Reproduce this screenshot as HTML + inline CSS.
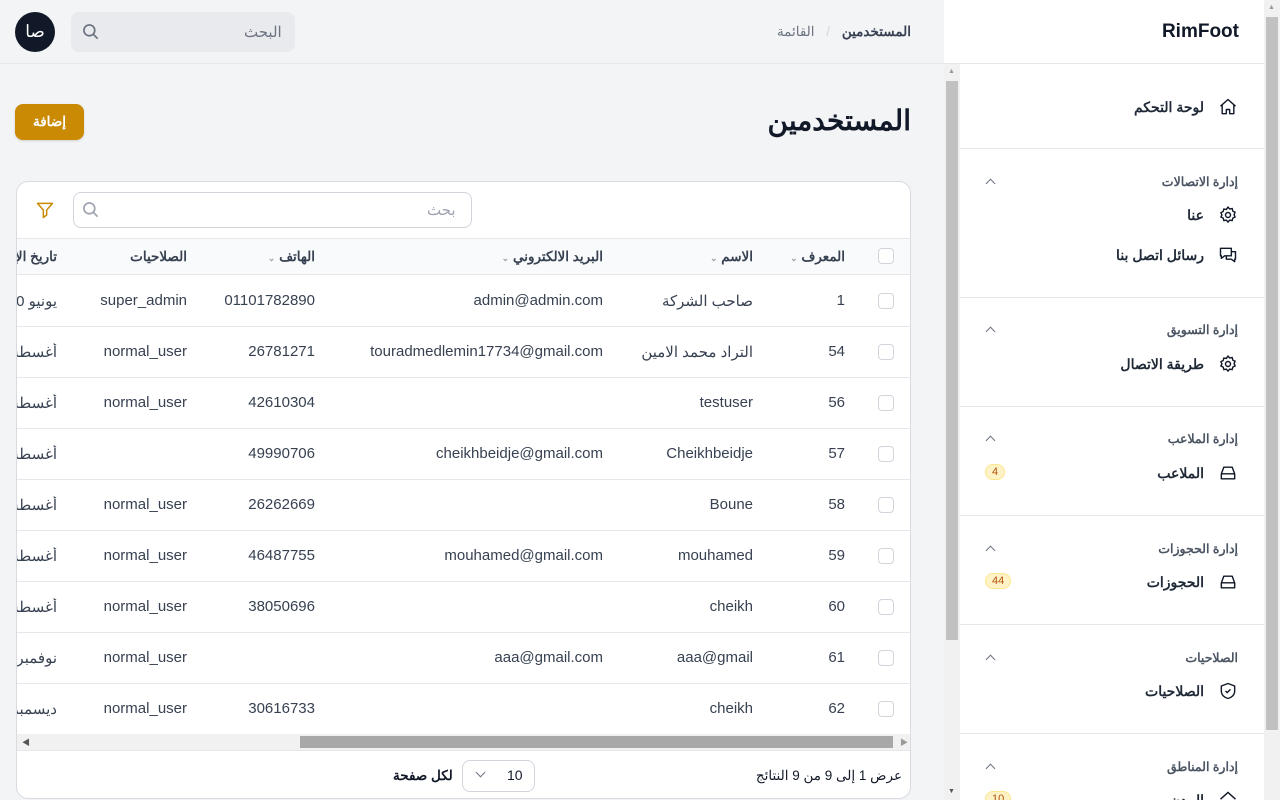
<!DOCTYPE html>
<html dir="rtl" lang="ar"><head><meta charset="utf-8"><style>
*{box-sizing:border-box;margin:0;padding:0}
html,body{width:1280px;height:800px;overflow:hidden}
body{background:#f3f4f6;font-family:"Liberation Sans","Noto Sans CJK SC",sans-serif;color:#111827;position:relative}
.abs{position:absolute}
.sb{background:#f1f1f1}
.thumb{background:#c1c1c1}
.navi{position:absolute;right:26px;font-size:14px;font-weight:bold;color:#1f2937;display:flex;align-items:center;gap:14px;direction:rtl}
.grp{position:absolute;right:26px;font-size:12.5px;color:#4b5563;font-weight:bold}
.chev{position:absolute;left:27px;width:7px;height:7px;border-left:1.3px solid #6b7280;border-top:1.3px solid #6b7280;transform:rotate(45deg)}
.hr{position:absolute;left:0;right:0;height:1px;background:#e5e7eb}
.badge{position:absolute;font-size:11px;color:#b45309;background:#fef3c7;border:1px solid #fde68a;border-radius:10px;padding:1px 6px;left:25px}
.td{position:absolute;font-size:15px;color:#374151;white-space:nowrap}
.th{position:absolute;font-size:13.5px;font-weight:bold;color:#374151;white-space:nowrap}
.cb{position:absolute;width:16px;height:16px;border:1px solid #d1d5db;border-radius:4px;background:#fff}
.rowb{position:absolute;left:0;right:0;height:1px;background:#e5e7eb}
</style></head><body>
<div class="abs" style="left:0;top:0;width:944px;height:64px;border-bottom:1px solid #e5e7eb"></div>
<div class="abs" style="left:15px;top:12px;width:40px;height:40px;border-radius:50%;background:#111827;color:#fff;font-size:17px;display:flex;align-items:center;justify-content:center">صا</div>
<div class="abs" style="left:71px;top:12px;width:224px;height:40px;border-radius:8px;background:#e9eaed"></div>
<div class="abs" style="left:244px;top:23px;font-size:15px;color:#6b7280">البحث</div>
<svg class="abs" style="left:81px;top:22px" width="20" height="20" viewBox="0 0 24 24" fill="none" stroke="#6b7280" stroke-width="2"><circle cx="10" cy="10" r="6.5"/><path d="M15 15l5 5"/></svg>
<div class="abs" style="right:369px;top:24px;font-size:13.5px;color:#6b7280;direction:rtl"><b style="color:#374151">المستخدمين</b> <span style="color:#d1d5db;margin:0 8px">/</span> القائمة</div>
<div class="abs" style="right:369px;top:104px;font-size:28px;font-weight:bold;color:#111827">المستخدمين</div>
<div class="abs" style="left:15px;top:104px;width:69px;height:36px;border-radius:8px;background:#ca8a04;color:#fff;font-size:13.5px;font-weight:bold;display:flex;align-items:center;justify-content:center;box-shadow:0 1px 2px rgba(0,0,0,.15)">إضافة</div>
<div class="abs" style="left:16px;top:181px;width:895px;height:618px;background:#fff;border:1px solid #d9dbe0;border-radius:12px;overflow:hidden">
 <svg class="abs" style="left:18px;top:18px" width="20" height="20" viewBox="0 0 24 24" fill="none" stroke="#ca8a04" stroke-width="1.8" stroke-linejoin="round"><path d="M3 4h18l-7 8v6l-4 3v-9z"/></svg>
 <div class="abs" style="left:56px;top:10px;width:399px;height:36px;border:1px solid #d1d5db;border-radius:8px"></div>
 <svg class="abs" style="left:64px;top:18px" width="20" height="20" viewBox="0 0 24 24" fill="none" stroke="#9ca3af" stroke-width="2"><circle cx="10" cy="10" r="6.5"/><path d="M15 15l5 5"/></svg>
 <div class="abs" style="left:410px;top:19px;font-size:15px;color:#9ca3af">بحث</div>
 <div class="abs" style="left:0;top:56px;width:895px;height:37px;background:#f9fafb;border-top:1px solid #e5e7eb;border-bottom:1px solid #e5e7eb"></div>
 <div class="cb" style="left:861px;top:66px"></div>
 <div class="th" style="right:65px;top:67px">المعرف <span style="color:#9ca3af;font-size:9px">⌄</span></div>
 <div class="th" style="right:157px;top:67px">الاسم <span style="color:#9ca3af;font-size:9px">⌄</span></div>
 <div class="th" style="right:307px;top:67px">البريد الالكتروني <span style="color:#9ca3af;font-size:9px">⌄</span></div>
 <div class="th" style="right:595px;top:67px">الهاتف <span style="color:#9ca3af;font-size:9px">⌄</span></div>
 <div class="th" style="right:723px;top:67px">الصلاحيات</div>
 <div class="th" style="left:0;top:67px;width:40px;overflow:hidden;direction:rtl">تاريخ الإنشاء</div>
 <div id="rows"></div>
 <div class="abs" style="left:0;top:552px;width:895px;height:16px;background:#f1f1f1"></div>
 <div class="abs" style="left:283px;top:554px;width:593px;height:12px;background:#a8a8a8"></div>
 <div class="abs" style="left:5px;top:555px;font-size:8px;color:#555">◀</div>
 <div class="abs" style="left:883px;top:555px;font-size:8px;color:#999">▶</div>
 <div class="abs" style="left:0;top:568px;width:895px;height:1px;background:#e5e7eb"></div>
 <div class="abs" style="right:8px;top:586px;font-size:13.5px;color:#111827">عرض 1 إلى 9 من 9 النتائج</div>
 <div class="abs" style="left:445px;top:578px;width:73px;height:32px;border:1px solid #d1d5db;border-radius:8px"></div>
 <div class="abs" style="left:490px;top:585px;font-size:14px">10</div>
 <div class="abs" style="left:460px;top:587px;width:7px;height:7px;border-right:1.3px solid #6b7280;border-bottom:1.3px solid #6b7280;transform:rotate(45deg)"></div>
 <div class="abs" style="left:376px;top:586px;font-size:13.5px;font-weight:bold">لكل صفحة</div>
</div>
<div class="abs sb" style="left:944px;top:64px;width:16px;height:736px"></div>
<div class="abs thumb" style="left:946px;top:81px;width:12px;height:559px"></div>
<div class="abs" style="left:948px;top:68px;font-size:7px;color:#999">▲</div>
<div class="abs" style="left:948px;top:788px;font-size:7px;color:#555">▼</div>
<div class="abs" style="left:944px;top:0;width:320px;height:64px;background:#fff;border-bottom:1px solid #e5e7eb"></div>
<div class="abs" style="right:41px;top:21px;font-size:19px;font-weight:bold;color:#111827">RimFoot</div>
<div class="abs" style="left:960px;top:64px;width:304px;height:736px;background:#fff;overflow:hidden">
 <div class="navi" style="top:33px"><svg width="20" height="20" viewBox="0 0 24 24" fill="none" stroke="#111827" stroke-width="1.7" stroke-linejoin="round"><path d="M3 11l9-8 9 8M5 9.5V20h5v-5h4v5h5V9.5"/></svg>لوحة التحكم</div>
 <div class="hr" style="top:84px"></div>
 <div class="grp" style="top:110px">إدارة الاتصالات</div><div class="chev" style="top:116px"></div>
 <div class="navi" style="top:141px"><svg width="20" height="20" viewBox="0 0 24 24" fill="none" stroke="#111827" stroke-width="1.7"><circle cx="12" cy="12" r="3"/><path d="M12 2.5l2 2.3 3-.5.8 3 2.7 1.4-1.2 2.8 1.2 2.8-2.7 1.4-.8 3-3-.5-2 2.3-2-2.3-3 .5-.8-3-2.7-1.4L4.7 12 3.5 9.2l2.7-1.4.8-3 3 .5z"/></svg>عنا</div>
 <div class="navi" style="top:181px"><svg width="20" height="20" viewBox="0 0 24 24" fill="none" stroke="#111827" stroke-width="1.7" stroke-linejoin="round"><path d="M3 4h13v9H8l-4 3v-3H3zM16 8h5v9h-1v3l-4-3h-6v-4"/></svg>رسائل اتصل بنا</div>
 <div class="hr" style="top:233px"></div>
 <div class="grp" style="top:258px">إدارة التسويق</div><div class="chev" style="top:264px"></div>
 <div class="navi" style="top:290px"><svg width="20" height="20" viewBox="0 0 24 24" fill="none" stroke="#111827" stroke-width="1.7"><circle cx="12" cy="12" r="3"/><path d="M12 2.5l2 2.3 3-.5.8 3 2.7 1.4-1.2 2.8 1.2 2.8-2.7 1.4-.8 3-3-.5-2 2.3-2-2.3-3 .5-.8-3-2.7-1.4L4.7 12 3.5 9.2l2.7-1.4.8-3 3 .5z"/></svg>طريقة الاتصال</div>
 <div class="hr" style="top:342px"></div>
 <div class="grp" style="top:367px">إدارة الملاعب</div><div class="chev" style="top:373px"></div>
 <div class="navi" style="top:399px"><svg width="20" height="20" viewBox="0 0 24 24" fill="none" stroke="#111827" stroke-width="1.7" stroke-linejoin="round"><path d="M4 13l3-8h10l3 8v6H4zM4 13h16"/></svg>الملاعب</div><div class="badge" style="top:400px">4</div>
 <div class="hr" style="top:451px"></div>
 <div class="grp" style="top:477px">إدارة الحجوزات</div><div class="chev" style="top:483px"></div>
 <div class="navi" style="top:508px"><svg width="20" height="20" viewBox="0 0 24 24" fill="none" stroke="#111827" stroke-width="1.7" stroke-linejoin="round"><path d="M4 13l3-8h10l3 8v6H4zM4 13h16"/></svg>الحجوزات</div><div class="badge" style="top:509px">44</div>
 <div class="hr" style="top:560px"></div>
 <div class="grp" style="top:586px">الصلاحيات</div><div class="chev" style="top:592px"></div>
 <div class="navi" style="top:617px"><svg width="20" height="20" viewBox="0 0 24 24" fill="none" stroke="#111827" stroke-width="1.7" stroke-linejoin="round"><path d="M12 3l8 3v6c0 5-4 8-8 9-4-1-8-4-8-9V6z M9 12l2 2 4-4"/></svg>الصلاحيات</div>
 <div class="hr" style="top:669px"></div>
 <div class="grp" style="top:695px">إدارة المناطق</div><div class="chev" style="top:701px"></div>
 <div class="navi" style="top:726px"><svg width="20" height="20" viewBox="0 0 24 24" fill="none" stroke="#111827" stroke-width="1.7"><path d="M3 11l9-8 9 8"/></svg>المدن</div><div class="badge" style="top:727px">10</div>
</div>
<div class="abs sb" style="left:1264px;top:0;width:16px;height:800px"></div>
<div class="abs thumb" style="left:1266px;top:17px;width:12px;height:713px"></div>
<div class="abs" style="left:1268px;top:4px;font-size:7px;color:#999">▲</div>
<script>
var d=[["1","صاحب الشركة","admin@admin.com","01101782890","super_admin","يونيو 0"],["54","التراد محمد الامين","touradmedlemin17734@gmail.com","26781271","normal_user","أغسطس"],["56","testuser","","42610304","normal_user","أغسطس"],["57","Cheikhbeidje","cheikhbeidje@gmail.com","49990706","","أغسطس"],["58","Boune","","26262669","normal_user","أغسطس"],["59","mouhamed","mouhamed@gmail.com","46487755","normal_user","أغسطس"],["60","cheikh","","38050696","normal_user","أغسطس"],["61","aaa@gmail","aaa@gmail.com","","normal_user","نوفمبر"],["62","cheikh","","30616733","normal_user","ديسمبر"]];
var h="";d.forEach(function(r,i){var t=93+i*51;var c=t+17;
if(i>0)h+='<div class="rowb" style="top:'+t+'px"></div>';
h+='<div class="cb" style="left:861px;top:'+(c+1)+'px"></div>';
h+='<div class="td" style="right:65px;top:'+c+'px">'+r[0]+'</div>';
h+='<div class="td" style="right:157px;top:'+c+'px">'+r[1]+'</div>';
h+='<div class="td" style="right:307px;top:'+c+'px">'+r[2]+'</div>';
h+='<div class="td" style="right:595px;top:'+c+'px">'+r[3]+'</div>';
h+='<div class="td" style="right:723px;top:'+c+'px">'+r[4]+'</div>';
h+='<div class="td" style="left:0;top:'+c+'px;width:40px;overflow:hidden;direction:rtl">'+r[5]+'</div>';});
document.getElementById("rows").innerHTML=h;
</script>
</body></html>
